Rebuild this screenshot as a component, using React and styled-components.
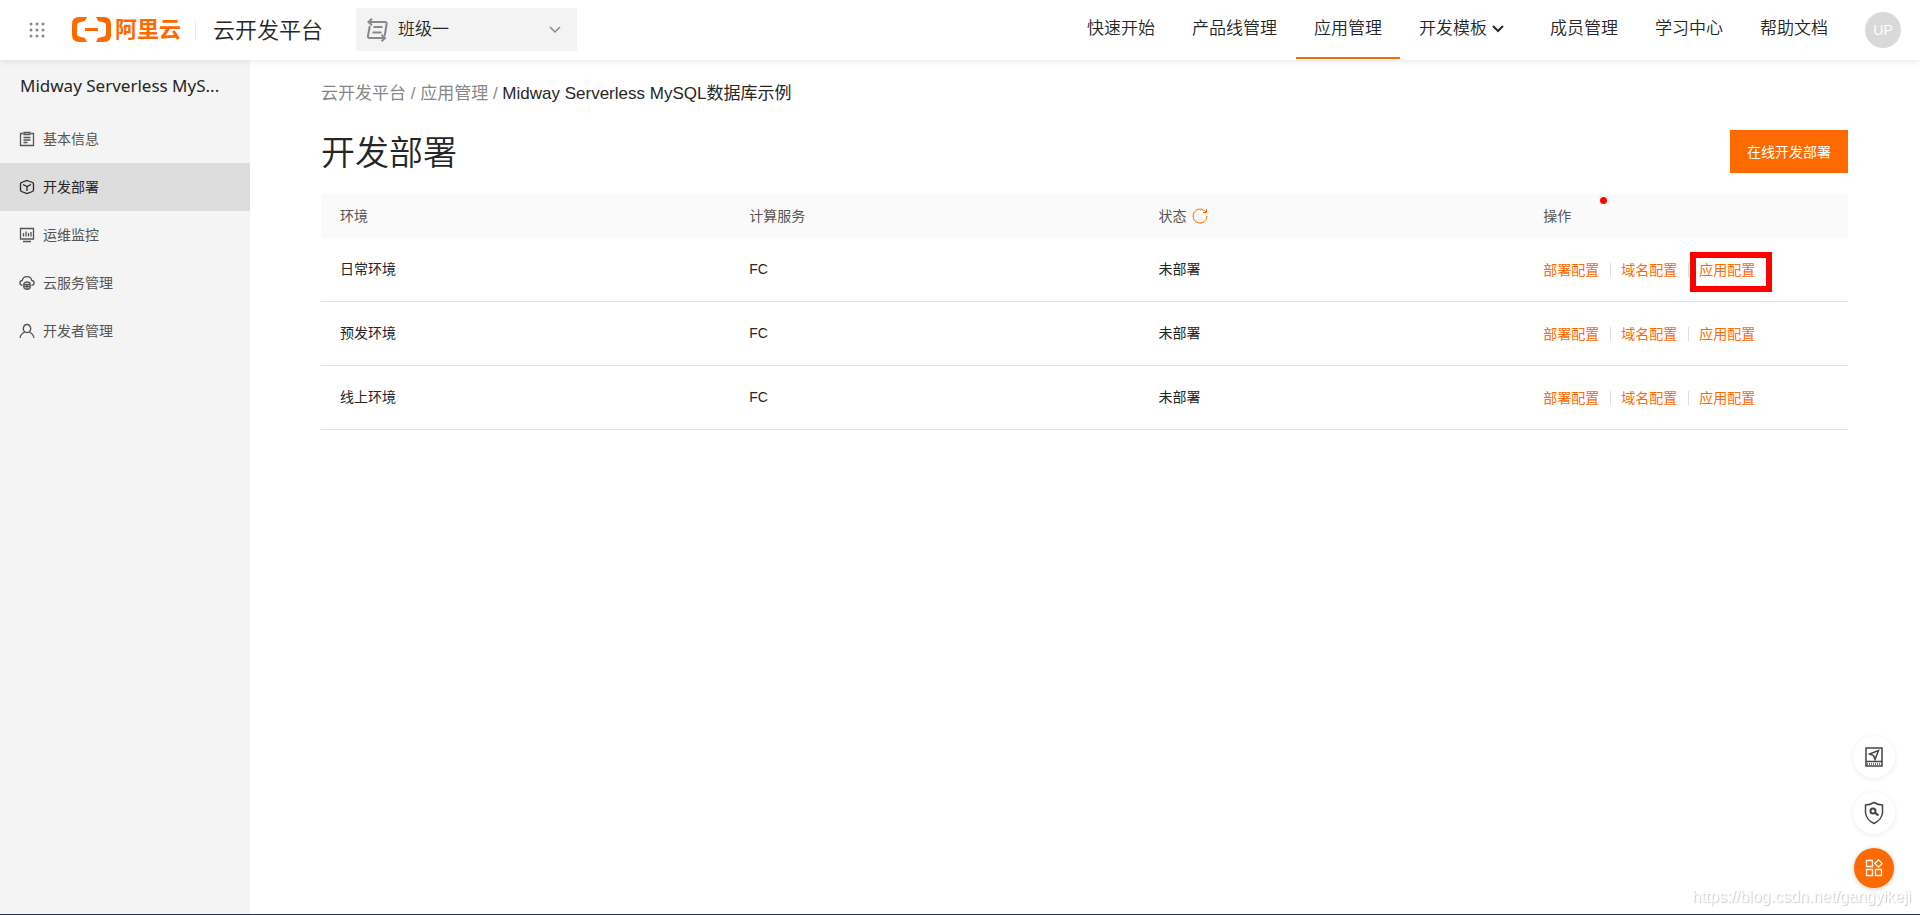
import React from "react";
import styled, { createGlobalStyle } from "styled-components";

const ORANGE = "#ff6a00";
const SANS = '"Liberation Sans", "Noto Sans CJK SC", sans-serif';

const GlobalStyle = createGlobalStyle`
  *, *::before, *::after { box-sizing: border-box; }
  body {
    margin: 0;
    background: #fff;
    color: #262626;
    font-family: ${SANS};
    font-size: 14px;
    line-height: 20px;
  }
  a { color: inherit; text-decoration: none; }
  button, select { font: inherit; color: inherit; border: 0; margin: 0; padding: 0; cursor: pointer; }
  svg { display: block; flex: none; }
`;

const Page = styled.div`
  min-height: 100vh;
  display: flex;
  flex-direction: column;
  border-bottom: 1px solid #2a3352;
`;

const Header = styled.header`
  height: 60px;
  display: flex;
  align-items: center;
  padding: 0 19px 1px 23px;
  background: #fff;
  box-shadow: 0 1px 6px rgba(0, 0, 0, 0.1);
  z-index: 1;
`;

const IconButton = styled.button`
  display: grid;
  place-items: center;
  width: 28px;
  height: 28px;
  background: none;
`;

const Brand = styled.a`
  display: flex;
  align-items: center;
  gap: 4px;
  margin-left: 21px;
  color: ${ORANGE};
  font-size: 22px;
  line-height: 24px;
  font-weight: 700;
`;

const Rule = styled.span`
  width: 1px;
  height: 20px;
  margin: 0 17px 0 14px;
  background: #ededed;
`;

const Product = styled.span`
  padding-top: 2px;
  font-size: 22px;
  line-height: 32px;
  font-weight: 350;
`;

const SpacePicker = styled.label`
  display: flex;
  align-items: center;
  gap: 10px;
  width: 221px;
  height: 43px;
  margin-left: 33px;
  padding: 0 16px 0 10px;
  background: #f3f3f3;
  color: #888;
`;

const SpaceSelect = styled.select`
  flex: 1;
  min-width: 0;
  appearance: none;
  background: none;
  color: #262626;
  font-size: 17px;
  line-height: 24px;
  font-weight: 350;
`;

const Nav = styled.nav`
  display: flex;
  gap: 1px;
  height: 59px;
  margin-left: auto;
`;

const NavLink = styled.a`
  display: flex;
  align-items: center;
  gap: 5px;
  height: 59px;
  padding: 0 18px;
  font-size: 17px;
  font-weight: 350;
  border-bottom: 2px solid ${(p) => (p.$active ? ORANGE : "transparent")};
`;

const Avatar = styled.button`
  width: 36px;
  height: 36px;
  margin-left: 19px;
  border-radius: 50%;
  background: #d9d9d9;
  color: #fff;
  font-size: 14px;
`;

const Body = styled.div`
  flex: 1;
  display: flex;
`;

const Sidebar = styled.aside`
  flex: none;
  width: 250px;
  background: #f4f4f4;
`;

const AppName = styled.div`
  padding: 14px 20px 0;
  height: 55px;
  font-family: "Noto Sans", sans-serif;
  font-size: 17px;
  line-height: 24px;
`;

const SideLink = styled.a`
  display: flex;
  align-items: center;
  gap: 8px;
  height: 48px;
  padding: 0 19px;
  color: ${(p) => (p.$active ? "#262626" : "#555")};
  background: ${(p) => (p.$active ? "#ddd" : "none")};
`;

const Main = styled.main`
  flex: 1;
  min-width: 0;
  padding: 21px 72px 0 71px;
`;

const Crumbs = styled.nav`
  font-size: 17px;
  line-height: 26px;
  color: #888;
`;

const Current = styled.span`
  color: #262626;
`;

const TitleRow = styled.div`
  display: flex;
  align-items: center;
  justify-content: space-between;
  margin: 19px 0 17px;
`;

const Title = styled.h1`
  margin: 0;
  padding-top: 4px;
  font-size: 34px;
  line-height: 47px;
  font-weight: 350;
`;

const Primary = styled.button`
  height: 43px;
  padding: 0 17px;
  background: ${ORANGE};
  color: #fff;
`;

const Table = styled.table`
  width: 100%;
  table-layout: fixed;
  border-collapse: separate;
  border-spacing: 0;
  text-align: left;
`;

const Th = styled.th`
  width: ${(p) => p.$width};
  height: 44px;
  padding: 0 19px;
  background: #fafafa;
  color: #555;
  font-weight: 400;
`;

const Td = styled.td`
  height: 64px;
  padding: 0 19px 2px;
  border-bottom: 1px solid #e3e3e3;
`;

const ActionTd = styled(Td)`
  padding: 0 19px;
`;

const Inline = styled.span`
  display: flex;
  align-items: center;
  gap: 6px;
`;

const HeadMark = styled(Inline)`
  position: relative;
  &::after {
    content: "";
    position: absolute;
    left: 57px;
    top: -9px;
    width: 7px;
    height: 7px;
    border-radius: 50%;
    background: #f00;
  }
`;

const Actions = styled.div`
  display: flex;
  color: ${ORANGE};
`;

const Action = styled.a`
  position: relative;
  & + & {
    display: flex;
    align-items: center;
  }
  & + &::before {
    content: "";
    width: 1px;
    height: 14px;
    margin: 0 10px 0 11px;
    background: #ddd;
  }
`;

const Highlight = styled.span`
  position: absolute;
  right: -17px;
  top: -8px;
  width: 82px;
  height: 40px;
  border: 6px solid #f00;
`;

const Tools = styled.div`
  position: fixed;
  right: 25px;
  bottom: 27px;
  display: flex;
  flex-direction: column;
  align-items: center;
  gap: 14px;
`;

const Tool = styled.button`
  display: grid;
  place-items: center;
  width: ${(p) => (p.$accent ? 40 : 42)}px;
  height: ${(p) => (p.$accent ? 40 : 42)}px;
  border-radius: 50%;
  background: ${(p) => (p.$accent ? ORANGE : "#fff")};
  color: ${(p) => (p.$accent ? "#fff" : "#444")};
  box-shadow: 0 1px 5px rgba(0, 0, 0, ${(p) => (p.$accent ? 0.2 : 0.09)});
`;

const Watermark = styled.div`
  position: fixed;
  right: 9px;
  bottom: 7px;
  color: #fff;
  font-size: 16px;
  line-height: 22px;
  text-shadow: 1px 1px 1px #ccc;
`;

function Svg({ w = 16, h = w, box, sw = 1, children }) {
  return (
    <svg width={w} height={h} viewBox={box || `0 0 ${w} ${h}`} fill="none" stroke="currentColor" strokeWidth={sw} aria-hidden="true">
      {children}
    </svg>
  );
}

const icons = {
  info: (
    <path d="M4 2.500H1.500v12h13v-12H12M5 1.500h6v2H5zM4.500 6.500h7M4.500 9h7M4.500 11.500h4" />
  ),
  deploy: (
    <path d="M8 1.500l5.500 2q1 .5 1 1.500v6q0 1-1 1.500l-5.500 2-5.500-2q-1-.5-1-1.500V5q0-1 1-1.500zM4 5.500l4 2 4-2M8 7.500v4.500" />
  ),
  monitor: (
    <path d="M1.500 1.500h13v10.500h-13zM4 14.500h8M4.500 6v3.500M7 4.500v5M9.500 6v3.500M12 5v4.500" />
  ),
  cloud: (
    <>
      <path d="M3.500 10.500C-.2 9.800.3 5.800 3.200 5.500 4.300.2 11.700.2 12.800 5.500c2.900.3 3.400 4.300-.3 5" />
      <path d="M4.800 9c0-2.700 6.400-2.700 6.400 0v3c0 3-6.400 3-6.400 0zM5 9.500h6M5 11.500h6M8 9.500V14" />
    </>
  ),
  user: (
    <path d="M1 15c.5-3.500 2.500-5 5-6C2.800 6.500 4.500 1.500 8 1.500s5.200 5 2 7.500c2.500 1 4.500 2.500 5 6M6 9q2 1 4 0" />
  ),
};

const sideItems = [
  ["基本信息", "info"],
  ["开发部署", "deploy"],
  ["运维监控", "monitor"],
  ["云服务管理", "cloud"],
  ["开发者管理", "user"],
];
const navItems = ["快速开始", "产品线管理", "应用管理", "开发模板", "成员管理", "学习中心", "帮助文档"];
const rows = ["日常环境", "预发环境", "线上环境"];
const actions = ["部署配置", "域名配置", "应用配置"];

export default function App() {
  return (
    <>
      <GlobalStyle />
      <Page>
        <Header>
          <IconButton aria-label="产品导航">
            <svg width="16" height="16" fill="#8a8a8a">
              {[2, 8, 14].map((y) => [2, 8, 14].map((x) => <circle key={`${x}-${y}`} cx={x} cy={y} r="1.5" />))}
            </svg>
          </IconButton>
          <Brand href="#">
            <svg width="39" height="25" viewBox="0 0 39 25" fill={ORANGE} aria-hidden="true">
              <path d="M15 0H7Q0 0 0 7v11q0 7 7 7h8l-2-4-6-1.500Q5 19 5 17V8q0-2 2-2.500L13 4zM24 0h8q7 0 7 7v11q0 7-7 7h-8l2-4 6-1.500q2-.5 2-2.500V8q0-2-2-2.500L26 4zM13 11h13v3H13z" />
            </svg>
            <span>阿里云</span>
          </Brand>
          <Rule />
          <Product>云开发平台</Product>
          <SpacePicker>
            <Svg w={22} h={24} sw={2}>
              <path d="M2 4h17q2 0 1.600 2L19 16q-.3 2-1 2M6 .8L2.500 4 6 7.200M3.800 8L2 18q-.3 2 1.500 2H19M15.500 16.800L19 20l-3.500 3.200M7.500 9h9M6.500 14.500h9" />
            </Svg>
            <SpaceSelect aria-label="空间" defaultValue="班级一">
              <option>班级一</option>
            </SpaceSelect>
            <Svg w={12} h={8} sw={1.5}>
              <path d="M1 1l5 5 5-5" />
            </Svg>
          </SpacePicker>
          <Nav aria-label="主导航">
            {navItems.map((t) => (
              <NavLink key={t} href="#" $active={t === "应用管理"}>
                {t}
                {t === "开发模板" && (
                  <Svg w={21} h={8} sw={2}>
                    <path d="M1 1l5 5 5-5" />
                  </Svg>
                )}
              </NavLink>
            ))}
          </Nav>
          <Avatar>UP</Avatar>
        </Header>
        <Body>
          <Sidebar>
            <AppName>Midway Serverless MyS...</AppName>
            <nav aria-label="应用菜单">
              {sideItems.map(([t, icon]) => (
                <SideLink key={t} href="#" $active={icon === "deploy"}>
                  <Svg sw={1.3}>{icons[icon]}</Svg>
                  {t}
                </SideLink>
              ))}
            </nav>
          </Sidebar>
          <Main>
            <Crumbs aria-label="面包屑">
              <a href="#">云开发平台</a> / <a href="#">应用管理</a> / <Current>Midway Serverless MySQL数据库示例</Current>
            </Crumbs>
            <TitleRow>
              <Title>开发部署</Title>
              <Primary>在线开发部署</Primary>
            </TitleRow>
            <Table>
              <thead>
                <tr>
                  <Th $width="26.8%">环境</Th>
                  <Th $width="26.8%">计算服务</Th>
                  <Th $width="25.2%">
                    <Inline>
                      状态
                      <Svg w={16}>
                        <g stroke={ORANGE}>
                          <path d="M15 8a7 7 0 1 1-2.500-5.300L14.500 4.500M14.500 1v3.500H11" />
                        </g>
                      </Svg>
                    </Inline>
                  </Th>
                  <Th>
                    <HeadMark>操作</HeadMark>
                  </Th>
                </tr>
              </thead>
              <tbody>
                {rows.map((env, i) => (
                  <tr key={env}>
                    <Td>{env}</Td>
                    <Td>FC</Td>
                    <Td>未部署</Td>
                    <ActionTd>
                      <Actions>
                        {actions.map((a) => (
                          <Action key={a} href="#">
                            {a}
                            {i === 0 && a === "应用配置" && <Highlight />}
                          </Action>
                        ))}
                      </Actions>
                    </ActionTd>
                  </tr>
                ))}
              </tbody>
            </Table>
          </Main>
        </Body>
      </Page>
      <Watermark>https://blog.csdn.net/gangyikeji</Watermark>
      <Tools>
        <Tool aria-label="使用指南">
          <Svg w={20} sw={1.5}>
            <path d="M2 1h16v18H2zM2 14.500h16M14.500 3.500l-3.500 9-1.500-4-4-1.500z" />
            <path d="M3 17h14" strokeDasharray="1 1" />
          </Svg>
        </Tool>
        <Tool aria-label="安全检测">
          <Svg w={20} h={24} sw={1.5}>
            <path d="M10 1.500q4 2.500 8.500 2.500v8q-1 7-8.500 10.500Q2.500 19 1.500 12V4q4.500 0 8.500-2.500z" />
            <circle cx="9" cy="10" r="2.500" strokeWidth="2" />
            <path d="M11 11.500l3.500 3M12 14l1.500-1.500" strokeWidth="2" />
          </Svg>
        </Tool>
        <Tool $accent aria-label="应用中心">
          <Svg w={18} sw={1.3}>
            <path d="M1.500 1.500h6v6h-6zM1.500 10.500h6v6h-6zM10.500 10.500h6v6h-6zM13.500.8l3.700 3.700-3.700 3.700-3.700-3.700z" />
          </Svg>
        </Tool>
      </Tools>
    </>
  );
}
